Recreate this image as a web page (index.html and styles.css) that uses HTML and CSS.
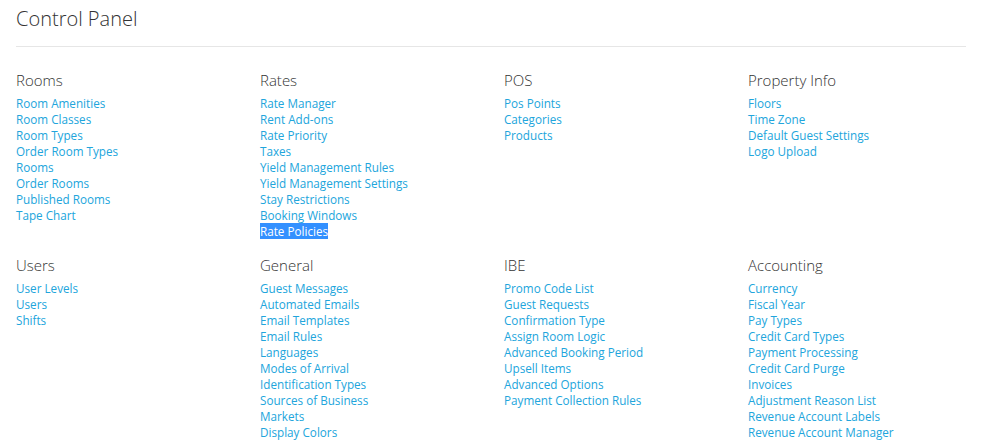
FILE: index.html
```html
<!DOCTYPE html>
<html>
<head>
<meta charset="utf-8">
<link rel="stylesheet" href="styles.css">
</head>
<body>
<div class="page">
  <h1 class="title">Control Panel</h1>
  <div class="rule"></div>
  <div class="grid">
    <section class="group">
      <h2>Rooms</h2>
      <ul>
        <li><a>Room Amenities</a></li>
        <li><a>Room Classes</a></li>
        <li><a>Room Types</a></li>
        <li><a>Order Room Types</a></li>
        <li><a>Rooms</a></li>
        <li><a>Order Rooms</a></li>
        <li><a>Published Rooms</a></li>
        <li><a>Tape Chart</a></li>
      </ul>
    </section>
    <section class="group">
      <h2>Rates</h2>
      <ul>
        <li><a>Rate Manager</a></li>
        <li><a>Rent Add-ons</a></li>
        <li><a>Rate Priority</a></li>
        <li><a>Taxes</a></li>
        <li><a>Yield Management Rules</a></li>
        <li><a>Yield Management Settings</a></li>
        <li><a>Stay Restrictions</a></li>
        <li><a>Booking Windows</a></li>
        <li><a class="selected">Rate Policies</a></li>
      </ul>
    </section>
    <section class="group">
      <h2>POS</h2>
      <ul>
        <li><a>Pos Points</a></li>
        <li><a>Categories</a></li>
        <li><a>Products</a></li>
      </ul>
    </section>
    <section class="group">
      <h2>Property Info</h2>
      <ul>
        <li><a>Floors</a></li>
        <li><a>Time Zone</a></li>
        <li><a>Default Guest Settings</a></li>
        <li><a>Logo Upload</a></li>
      </ul>
    </section>
    <section class="group">
      <h2>Users</h2>
      <ul>
        <li><a>User Levels</a></li>
        <li><a>Users</a></li>
        <li><a>Shifts</a></li>
      </ul>
    </section>
    <section class="group">
      <h2>General</h2>
      <ul>
        <li><a>Guest Messages</a></li>
        <li><a>Automated Emails</a></li>
        <li><a>Email Templates</a></li>
        <li><a>Email Rules</a></li>
        <li><a>Languages</a></li>
        <li><a>Modes of Arrival</a></li>
        <li><a>Identification Types</a></li>
        <li><a>Sources of Business</a></li>
        <li><a>Markets</a></li>
        <li><a>Display Colors</a></li>
      </ul>
    </section>
    <section class="group">
      <h2>IBE</h2>
      <ul>
        <li><a>Promo Code List</a></li>
        <li><a>Guest Requests</a></li>
        <li><a>Confirmation Type</a></li>
        <li><a>Assign Room Logic</a></li>
        <li><a>Advanced Booking Period</a></li>
        <li><a>Upsell Items</a></li>
        <li><a>Advanced Options</a></li>
        <li><a>Payment Collection Rules</a></li>
      </ul>
    </section>
    <section class="group">
      <h2>Accounting</h2>
      <ul>
        <li><a>Currency</a></li>
        <li><a>Fiscal Year</a></li>
        <li><a>Pay Types</a></li>
        <li><a>Credit Card Types</a></li>
        <li><a>Payment Processing</a></li>
        <li><a>Credit Card Purge</a></li>
        <li><a>Invoices</a></li>
        <li><a>Adjustment Reason List</a></li>
        <li><a>Revenue Account Labels</a></li>
        <li><a>Revenue Account Manager</a></li>
      </ul>
    </section>
  </div>
</div>
</body>
</html>
```
FILE: styles.css
```css
* { box-sizing: border-box; }
html, body { margin: 0; padding: 0; background: #fff; }
body { font-family: "Open Sans", "Liberation Sans", sans-serif; color: #333; overflow: hidden; }
.page { padding: 0 35px 0 16px; }
.title {
  margin: 0;
  padding-top: 5px;
  font-size: 20px;
  font-weight: 300;
  line-height: 28px;
  color: #333;
}
.rule { height: 1px; background: #e6e6e6; margin-top: 13px; width: 950px; }
.grid {
  display: grid;
  grid-template-columns: repeat(4, 244px);
  row-gap: 15px;
  padding-top: 22px;
}
.group h2 {
  margin: 0 0 4px 0;
  font-size: 15px;
  font-weight: 300;
  line-height: 22px;
  color: #333;
}
.group ul { list-style: none; margin: 0; padding: 0; }
.group li { font-size: 11.7px; line-height: 16px; }
.group a { color: #21a5dc; text-decoration: none; }
.group a.selected { background: #3390ff; color: #fff; }
```
